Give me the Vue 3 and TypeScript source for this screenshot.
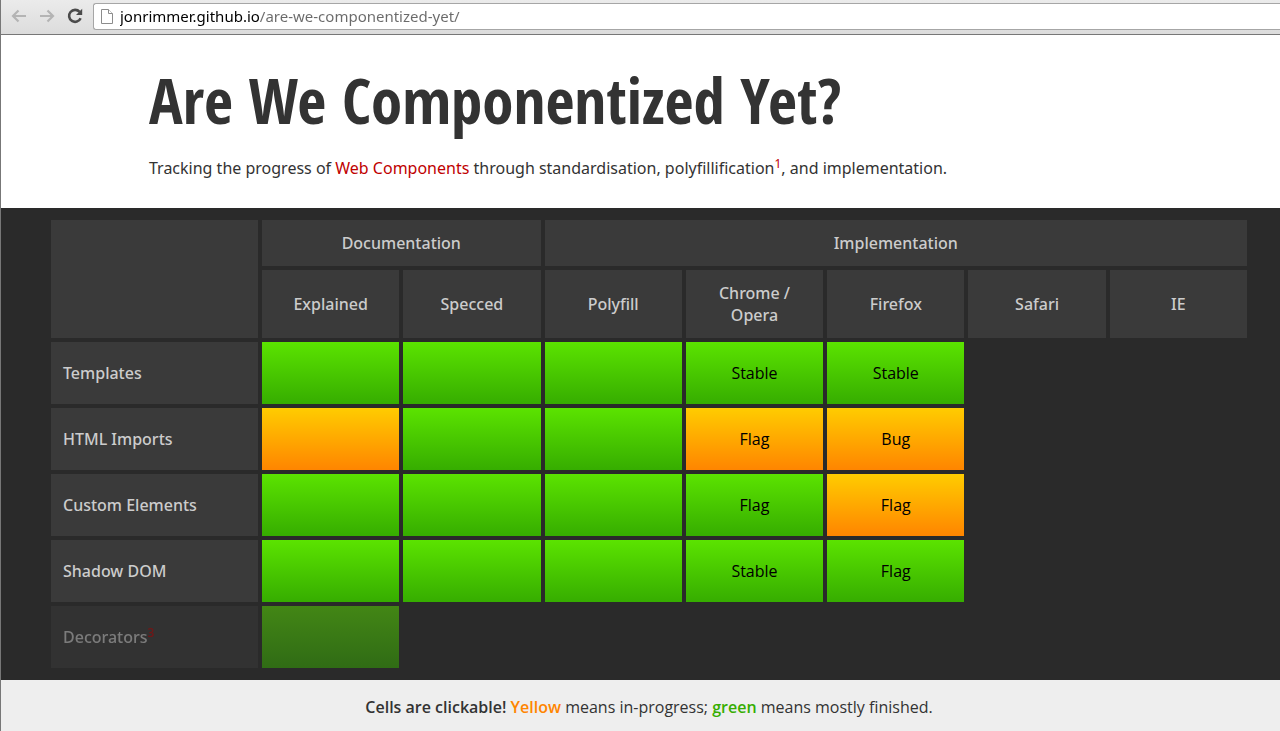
<script setup lang="ts">
import { ref } from 'vue'

type Tone = 'done' | 'progress'
interface Cell {
  tone: Tone
  text?: string
}
interface Row {
  name: string
  note?: string
  faded?: boolean
  cells: Cell[]
}

const address = ref('jonrimmer.github.io/are-we-componentized-yet/')
const columns = ['Explained', 'Specced', 'Polyfill', 'Chrome / Opera', 'Firefox', 'Safari', 'IE']

const done = (text?: string): Cell => ({ tone: 'done', text })
const progress = (text?: string): Cell => ({ tone: 'progress', text })

const rows: Row[] = [
  { name: 'Templates', cells: [done(), done(), done(), done('Stable'), done('Stable')] },
  { name: 'HTML Imports', cells: [progress(), done(), done(), progress('Flag'), progress('Bug')] },
  { name: 'Custom Elements', cells: [done(), done(), done(), done('Flag'), progress('Flag')] },
  { name: 'Shadow DOM', cells: [done(), done(), done(), done('Stable'), done('Flag')] },
  { name: 'Decorators', note: '3', faded: true, cells: [done()] },
]
</script>

<template>
  <div class="window">
    <nav class="toolbar" aria-label="Browser">
      <button type="button" class="tool" aria-label="Back" disabled>
        <svg width="16" height="14" viewBox="0 0 16 14" fill="none" stroke="#b4b4b4" stroke-width="2.2">
          <path d="M15 7H2.5M7.5 1.5L2 7l5.500 5.500" />
        </svg>
      </button>
      <button type="button" class="tool" aria-label="Forward" disabled>
        <svg width="16" height="14" viewBox="0 0 16 14" fill="none" stroke="#b4b4b4" stroke-width="2.2">
          <path d="M1 7h12.500M8.500 1.500L14 7l-5.500 5.500" />
        </svg>
      </button>
      <button type="button" class="tool" aria-label="Reload">
        <svg width="16" height="16" viewBox="0 0 16 16">
          <path d="M12.600 3.900A6 6 0 1 0 13.600 10.300" fill="none" stroke="#4b4b4b" stroke-width="2.600" />
          <path d="M15.200 .8V7H9z" fill="#4b4b4b" />
        </svg>
      </button>
      <div class="omnibox">
        <svg width="12" height="15" viewBox="0 0 12 15" fill="#fff" stroke="#8c8c8c">
          <path d="M.5.5h7l4 4v10H.5z" />
          <path d="M7.500.5v4h4" />
        </svg>
        <input v-model="address" class="address" type="text" aria-label="Address" spellcheck="false" />
      </div>
    </nav>

    <header class="intro">
      <h1>Are We Componentized Yet?</h1>
      <p>
        Tracking the progress of <a href="#web-components">Web Components</a> through standardisation,
        polyfillification<sup><a href="#note-1">1</a></sup>, and implementation.
      </p>
    </header>

    <main class="board">
      <table>
        <colgroup>
          <col class="label-col" />
          <col v-for="c in columns" :key="c" />
        </colgroup>
        <thead>
          <tr class="groups">
            <td rowspan="2"></td>
            <th colspan="2" scope="colgroup">Documentation</th>
            <th colspan="5" scope="colgroup">Implementation</th>
          </tr>
          <tr class="columns">
            <th v-for="c in columns" :key="c" scope="col">{{ c }}</th>
          </tr>
        </thead>
        <tbody>
          <tr v-for="row in rows" :key="row.name" :class="{ faded: row.faded }">
            <th scope="row">{{ row.name }}<sup v-if="row.note"><a :href="'#note-' + row.note">{{ row.note }}</a></sup></th>
            <td v-for="(cell, i) in row.cells" :key="i" :class="cell.tone">
              <a href="#details" :aria-label="row.name + ', ' + columns[i]">{{ cell.text }}</a>
            </td>
          </tr>
        </tbody>
      </table>
    </main>

    <footer class="legend">
      <strong>Cells are clickable!</strong> <strong class="yellow">Yellow</strong> means in-progress;
      <strong class="green">green</strong> means mostly finished.
    </footer>
  </div>
</template>

<style>
body {
  margin: 0;
  background: #eee;
}
</style>

<style scoped>
.window {
  box-sizing: border-box;
  min-height: 100vh;
  border-left: 1px solid #777;
  background: #eee;
  color: #333;
  font: 16px/22px 'Open Sans', 'Noto Sans', sans-serif;
}

.toolbar {
  box-sizing: border-box;
  display: flex;
  align-items: center;
  height: 35px;
  padding: 0 0 2px 4px;
  border-bottom: 1px solid #777;
  background: linear-gradient(#ebebeb, #dcdcdc);
}

.tool {
  display: flex;
  align-items: center;
  justify-content: center;
  width: 28px;
  height: 28px;
  padding: 0;
  border: 0;
  background: none;
}

.omnibox {
  box-sizing: border-box;
  display: flex;
  flex: 1;
  align-items: center;
  gap: 7px;
  height: 27px;
  margin-left: 4px;
  padding-left: 7px;
  border: 1px solid #a6a6a6;
  border-right: 0;
  border-radius: 3px 0 0 3px;
  background: #fff;
}

.address {
  flex: 1;
  min-width: 0;
  height: 22px;
  padding: 0;
  border: 0;
  outline: 0;
  background: linear-gradient(to right, #000 140px, #6a6a6a 140px);
  background-clip: text;
  color: transparent;
  font: 15px/22px 'Noto Sans', sans-serif;
}

.intro {
  padding: 25px 148px 29px;
  background: #fff;
}

h1 {
  margin: 0;
  font: bold 63px/80px 'Open Sans Condensed', 'Roboto Condensed', sans-serif;
  white-space: nowrap;
}

.intro p {
  margin: 17px 0 0;
  font-family: 'Noto Sans', sans-serif;
}

a {
  color: #c00000;
  text-decoration: none;
}

sup {
  font-size: 12px;
  line-height: 0;
}

.board {
  padding: 8px 29px 8px 46px;
  background: #2a2a2a;
}

table {
  width: 100%;
  table-layout: fixed;
  border-collapse: separate;
  border-spacing: 4px;
}

.label-col {
  width: 207px;
}

th,
td {
  padding: 0;
  font-weight: 500;
}

th,
thead td {
  background: #3a3a3a;
  color: #ccc;
}

th {
  font-family: 'Noto Sans', sans-serif;
}

.groups th {
  height: 46px;
}

.columns th {
  height: 44px;
  padding: 12px 24px;
}

tbody th {
  height: 62px;
  padding-left: 12px;
  text-align: left;
}

td a {
  display: block;
  height: 62px;
  color: #000;
  font-weight: 400;
  line-height: 62px;
  text-align: center;
}

.done {
  background: linear-gradient(#5be300, #36ad00);
}

.progress {
  background: linear-gradient(#ffcc00, #ff8500);
}

.faded th,
.faded td {
  opacity: 0.5;
}

.legend {
  padding: 16px 0 13px 17px;
  text-align: center;
}

strong {
  font-weight: 600;
}

.yellow {
  color: #ff8500;
}

.green {
  color: #36ad00;
}
</style>
